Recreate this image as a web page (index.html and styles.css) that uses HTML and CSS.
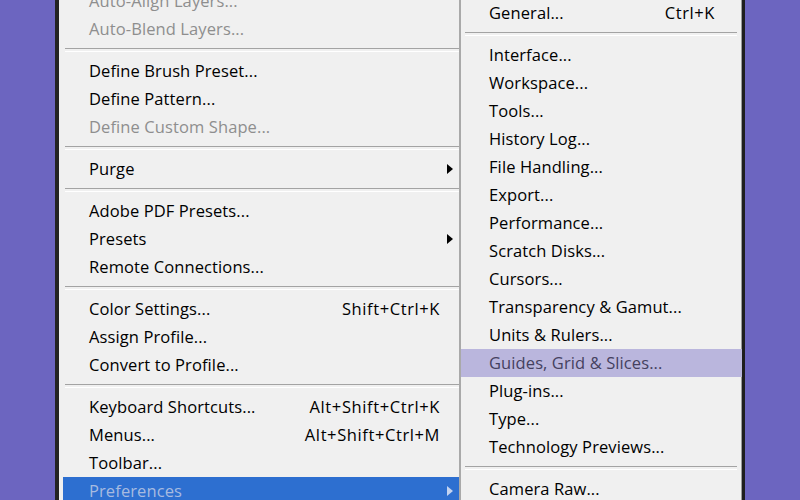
FILE: index.html
```html
<!DOCTYPE html>
<html>
<head>
<meta charset="utf-8">
<link rel="stylesheet" href="styles.css">
</head>
<body>
<div class="screen">
  <div class="gutter"></div>
  <ul class="menu main">
    <li class="item disabled"><span class="label">Auto-Align Layers...</span></li>
    <li class="item disabled"><span class="label">Auto-Blend Layers...</span></li>
    <li class="sep"></li>
    <li class="item"><span class="label">Define Brush Preset...</span></li>
    <li class="item"><span class="label">Define Pattern...</span></li>
    <li class="item disabled"><span class="label">Define Custom Shape...</span></li>
    <li class="sep"></li>
    <li class="item sub"><span class="label">Purge</span><span class="arrow"><svg width="6" height="10" viewBox="0 0 6 10"><polygon points="0,0 6,5 0,10"/></svg></span></li>
    <li class="sep"></li>
    <li class="item"><span class="label">Adobe PDF Presets...</span></li>
    <li class="item sub"><span class="label">Presets</span><span class="arrow"><svg width="6" height="10" viewBox="0 0 6 10"><polygon points="0,0 6,5 0,10"/></svg></span></li>
    <li class="item"><span class="label">Remote Connections...</span></li>
    <li class="sep"></li>
    <li class="item"><span class="label">Color Settings...</span><span class="key">Shift+Ctrl+K</span></li>
    <li class="item"><span class="label">Assign Profile...</span></li>
    <li class="item"><span class="label">Convert to Profile...</span></li>
    <li class="sep"></li>
    <li class="item"><span class="label">Keyboard Shortcuts...</span><span class="key">Alt+Shift+Ctrl+K</span></li>
    <li class="item"><span class="label">Menus...</span><span class="key">Alt+Shift+Ctrl+M</span></li>
    <li class="item"><span class="label">Toolbar...</span></li>
    <li class="item sub active"><span class="label">Preferences</span><span class="arrow"><svg width="6" height="10" viewBox="0 0 6 10"><polygon points="0,0 6,5 0,10"/></svg></span></li>
  </ul>
  <ul class="menu submenu">
    <li class="item"><span class="label">General...</span><span class="key">Ctrl+K</span></li>
    <li class="sep"></li>
    <li class="item"><span class="label">Interface...</span></li>
    <li class="item"><span class="label">Workspace...</span></li>
    <li class="item"><span class="label">Tools...</span></li>
    <li class="item"><span class="label">History Log...</span></li>
    <li class="item"><span class="label">File Handling...</span></li>
    <li class="item"><span class="label">Export...</span></li>
    <li class="item"><span class="label">Performance...</span></li>
    <li class="item"><span class="label">Scratch Disks...</span></li>
    <li class="item"><span class="label">Cursors...</span></li>
    <li class="item"><span class="label">Transparency &amp; Gamut...</span></li>
    <li class="item"><span class="label">Units &amp; Rulers...</span></li>
    <li class="item hover"><span class="label">Guides, Grid &amp; Slices...</span></li>
    <li class="item"><span class="label">Plug-ins...</span></li>
    <li class="item"><span class="label">Type...</span></li>
    <li class="item"><span class="label">Technology Previews...</span></li>
    <li class="sep"></li>
    <li class="item"><span class="label">Camera Raw...</span></li>
  </ul>
</div>
</body>
</html>
```
FILE: styles.css
```css
* { box-sizing: border-box; }
html, body {
  margin: 0;
  padding: 0;
  background: #6c65c0;
}
body {
  width: 800px;
  height: 500px;
  overflow: hidden;
  font-family: "Open Sans", "Noto Sans", sans-serif;
  font-size: 16.5px;
  color: #000;
}
.screen {
  display: flex;
  align-items: flex-start;
  height: 500px;
  overflow: hidden;
}
.gutter {
  width: 55px;
  flex: none;
}
.menu {
  list-style: none;
  margin: 0;
  padding: 0;
  background: #f0f0f0;
  flex: none;
}
.main {
  width: 406px;
  margin-top: -13px;
  border-left: 4px solid #232323;
  border-right: 2px solid #a9a9a9;
  padding-bottom: 40px;
}
.submenu {
  width: 284px;
  margin-top: -1px;
  border-right: 3px solid #1e1e1e;
  box-shadow: inset -1px 0 0 #9a9a9a;
  padding-bottom: 40px;
}
.item {
  display: flex;
  align-items: center;
  height: 28px;
  line-height: 28px;
  white-space: nowrap;
}
.main .item {
  margin-left: 4px;
  padding-left: 26px;
  padding-right: 6px;
}
.submenu .item {
  padding-left: 28px;
  padding-right: 27px;
}
.label { flex: 1; letter-spacing: 0.1px; }
.key { flex: none; letter-spacing: 0.6px; }
.main .key { margin-right: 13px; }
.arrow {
  flex: none;
  width: 6px;
  height: 10px;
  display: flex;
}
.arrow svg { fill: #000; display: block; }
.disabled { color: #8e8e8e; }
.active {
  background: #2d6fd0;
  color: #a7bbe0;
}
.active .arrow svg { fill: #c3d3f0; }
.hover {
  background: #bab6dd;
  color: #45415f;
}
.sep {
  height: 14px;
  padding-top: 5px;
}
.sep::before {
  content: "";
  display: block;
  height: 2px;
  border-top: 1px solid #a3a3a3;
  border-bottom: 1px solid #ffffff;
}
.main .sep { margin-left: 6px; }
.submenu .sep { margin-left: 4px; margin-right: 5px; }
```
